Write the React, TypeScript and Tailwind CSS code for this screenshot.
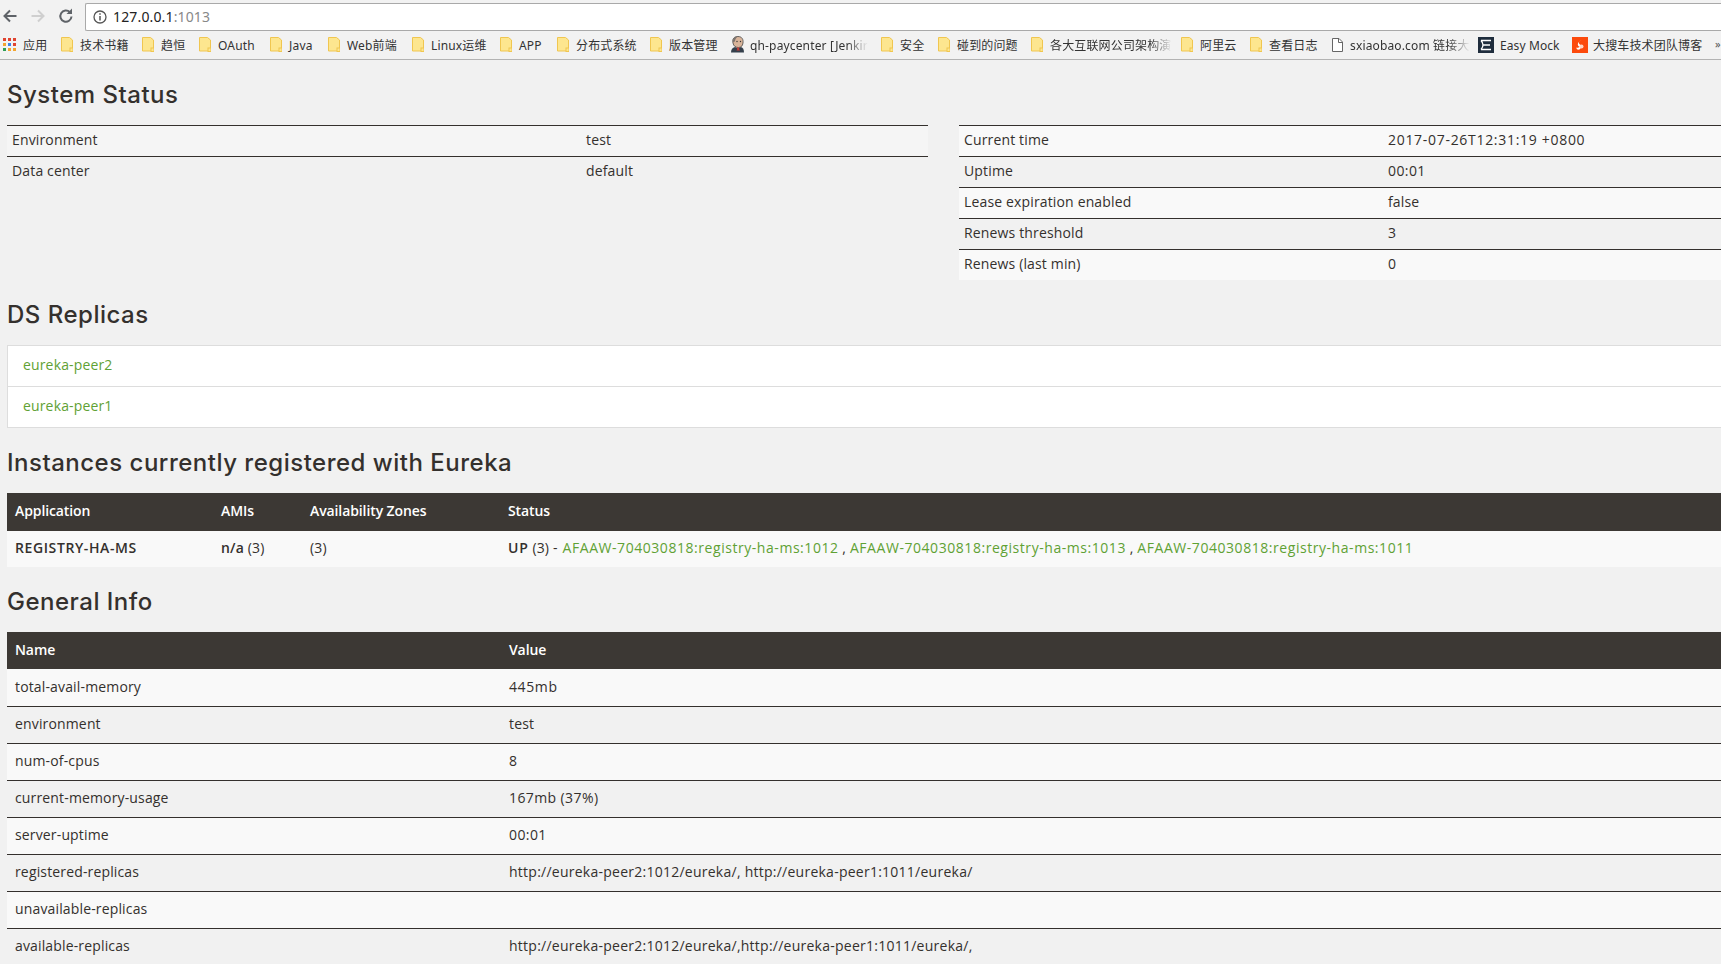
import React from "react";

const sans = "font-['Open_Sans','Noto_Sans_CJK_SC',sans-serif]";

function Folder() {
  return (
    <svg width="12" height="15" viewBox="0 0 12 15" className="shrink-0">
      <path d="M.5.5h8l3 2.5v11H.5z" fill="#fde68f" stroke="#f0c650" />
      <rect x="9" y="11" width="3" height="3.5" fill="#fde68f" stroke="#f0c650" strokeWidth="1" />
    </svg>
  );
}

function Apps() {
  const colors = ["#e0432f", "#e0432f", "#e0432f", "#f3a52f", "#3d82e8", "#e0432f", "#2f9e57", "#f3a52f", "#f3a52f"];
  return (
    <div className="grid shrink-0 grid-cols-[repeat(3,3px)] grid-rows-[repeat(3,3px)] gap-[2px]">
      {colors.map((c, i) => (
        <span key={i} className="block" style={{ backgroundColor: c }} />
      ))}
    </div>
  );
}

function Jenkins() {
  return (
    <svg width="15" height="17" viewBox="0 0 15 17" className="shrink-0">
      <path d="M3 7C2 3 4 .5 8 .5s5.500 3 5 6.500c-.5 3-2 4.500-4.500 4.500C5.500 11.500 3.500 10 3 7z" fill="#d8b49a" stroke="#444" strokeWidth=".8" />
      <path d="M3 6C2.500 2.500 5 .5 8 .5c-2 1-3 3-3 5z" fill="#7b7470" />
      <path d="M1 16.500c0-3 1.500-5 4-5.500l3 1.500 3-1.500c2 .5 3 2.500 3 5.500z" fill="#35404c" />
      <path d="M6.500 11.500h3l-.5 1.500 1 1.500H6.500l.8-1.500z" fill="#c23b36" />
      <circle cx="7" cy="5.500" r=".7" fill="#333" />
      <circle cx="10.500" cy="5.500" r=".7" fill="#333" />
    </svg>
  );
}

function FileIcon() {
  return (
    <svg width="11" height="14" viewBox="0 0 11 14" className="shrink-0">
      <path d="M.5.500h6.500l3.500 3.500v9.500H.5z" fill="#fff" stroke="#666" />
      <path d="M6.500.500v4h4" fill="none" stroke="#666" />
    </svg>
  );
}

function EasyMock() {
  return (
    <svg width="16" height="16" viewBox="0 0 16 16" className="shrink-0">
      <rect width="16" height="16" fill="#1f2d3d" />
      <path d="M3 3.500h10M5.500 8H12M3 12.500h10M3 3.500Q7 8 3 12.500" fill="none" stroke="#fff" strokeWidth="1.300" />
    </svg>
  );
}

function Souche() {
  return (
    <svg width="16" height="16" viewBox="0 0 16 16" className="shrink-0">
      <rect width="16" height="16" fill="#fc4a0c" />
      <path d="M10 3C7 4 6 6 8 7.500c2 1 2 3-.5 5-2 .5-3.500-.5-3-2 2 .5 3 0 3-1C5 9 5 5 10 3z" fill="#fff" />
      <circle cx="9.500" cy="9.500" r="2" fill="#ffd7c6" />
    </svg>
  );
}

const fade = "[mask-image:linear-gradient(to_right,black_82%,transparent)]";

const bookmarks: { label: string; icon: React.ReactNode; w: string; text: string }[] = [
  { label: "应用", icon: <Apps />, w: "w-[58px]", text: "ml-[7px]" },
  { label: "技术书籍", icon: <Folder />, w: "w-[81px]", text: "ml-[7px]" },
  { label: "趋恒", icon: <Folder />, w: "w-[57px]", text: "ml-[7px]" },
  { label: "OAuth", icon: <Folder />, w: "w-[71px]", text: "ml-[7px] tracking-[0.2px]" },
  { label: "Java", icon: <Folder />, w: "w-[58px]", text: "ml-[7px] tracking-[0.2px]" },
  { label: "Web前端", icon: <Folder />, w: "w-[84px]", text: "ml-[7px]" },
  { label: "Linux运维", icon: <Folder />, w: "w-[88px]", text: "ml-[7px]" },
  { label: "APP", icon: <Folder />, w: "w-[57px]", text: "ml-[7px]" },
  { label: "分布式系统", icon: <Folder />, w: "w-[93px]", text: "ml-[7px]" },
  { label: "版本管理", icon: <Folder />, w: "w-[80px]", text: "ml-[7px]" },
  { label: "qh-paycenter [Jenkir", icon: <Jenkins />, w: "w-[151px]", text: `ml-[5px] ${fade}` },
  { label: "安全", icon: <Folder />, w: "w-[57px]", text: "ml-[7px]" },
  { label: "碰到的问题", icon: <Folder />, w: "w-[93px]", text: "ml-[7px]" },
  { label: "各大互联网公司架构演", icon: <Folder />, w: "w-[150px]", text: `ml-[7px] ${fade}` },
  { label: "阿里云", icon: <Folder />, w: "w-[69px]", text: "ml-[7px]" },
  { label: "查看日志", icon: <Folder />, w: "w-[82px]", text: "ml-[7px]" },
  { label: "sxiaobao.com 链接大", icon: <FileIcon />, w: "w-[146px]", text: `ml-[7px] ${fade}` },
  { label: "Easy Mock", icon: <EasyMock />, w: "w-[94px]", text: "ml-[6px] tracking-[0.1px]" },
  { label: "大搜车技术团队博客", icon: <Souche />, w: "w-[143px]", text: "ml-[5px]" },
];

function ChromeBar() {
  return (
    <header className="shrink-0 bg-[#f2f2f2] font-['Noto_Sans','Noto_Sans_CJK_SC',sans-serif]">
      <div className="flex h-[31px] items-center">
        <div className="flex w-[85px] shrink-0 items-center pt-px">
          <svg width="18" height="18" viewBox="0 0 18 18" fill="none" stroke="#5f6368" strokeWidth="2" className="ml-px">
            <path d="M15.500 9H3.500M9 3.500L3.500 9 9 14.500" />
          </svg>
          <svg width="18" height="18" viewBox="0 0 18 18" fill="none" stroke="#cfcfcf" strokeWidth="2" className="ml-[10px]">
            <path d="M2.500 9h12M9 3.500L14.500 9 9 14.500" />
          </svg>
          <svg width="18" height="18" viewBox="0 0 18 18" fill="none" stroke="#5f6368" strokeWidth="2" className="ml-[10px]">
            <path d="M14.500 9.500a5.600 5.600 0 1 1-1.600-4.300" />
            <path d="M15 1.500v5.500H9.500z" fill="#5f6368" stroke="none" />
          </svg>
        </div>
        <div className="mt-[3px] flex h-[28px] flex-1 items-center rounded-l-[2px] border border-r-0 border-[#a9a9a9] bg-white pl-[7px]">
          <svg width="14" height="14" viewBox="0 0 14 14" fill="none" stroke="#555" strokeWidth="1.300" className="shrink-0">
            <circle cx="7" cy="7" r="6" />
            <path d="M7 6v4.500M7 3.300v1.500" strokeWidth="1.500" />
          </svg>
          <span className="ml-[6px] text-[14px] leading-none text-[#222]">
            127.0.0.1<span className="text-[#888]">:1013</span>
          </span>
        </div>
      </div>
      <div className="flex h-[29px] items-center overflow-hidden border-b border-[#b3b3b3] pb-px pl-[3px] text-[12px] text-[#333]">
        {bookmarks.map((b) => (
          <div key={b.label} className={`flex shrink-0 items-center ${b.w}`}>
            {b.icon}
            <span className={`whitespace-nowrap pt-[2px] ${b.text}`}>{b.label}</span>
          </div>
        ))}
        <span className="text-[11px] text-[#555]">»</span>
      </div>
    </header>
  );
}

function Heading({ children, className }: { children: React.ReactNode; className: string }) {
  return (
    <h2 className={`flex h-[34px] shrink-0 items-center font-['Inter',sans-serif] text-[24px] font-medium tracking-[0.5px] text-[#34302d] ${className}`}>
      {children}
    </h2>
  );
}

function KV({ rows, col, stripeFirst }: { rows: [string, string, string?][]; col: string; stripeFirst: string }) {
  return (
    <table className="w-full table-fixed border-separate border-spacing-0">
      <colgroup>
        <col className={col} />
        <col />
      </colgroup>
      <tbody>
        {rows.map(([k, v, t], i) => (
          <tr key={k} className={i % 2 === 0 ? stripeFirst : ""}>
            <td className="h-[31px] border-t border-[#34302d] px-[5px] pb-[3px]">{k}</td>
            <td className={`h-[31px] border-t border-[#34302d] px-[5px] pb-[3px] ${t ?? ""}`}>{v}</td>
          </tr>
        ))}
      </tbody>
    </table>
  );
}

const general: [string, string, string][] = [
  ["total-avail-memory", "445mb", "tracking-[0.6px]"],
  ["environment", "test", ""],
  ["num-of-cpus", "8", ""],
  ["current-memory-usage", "167mb (37%)", "tracking-[0.4px]"],
  ["server-uptime", "00:01", "tracking-[0.4px]"],
  ["registered-replicas", "http://eureka-peer2:1012/eureka/, http://eureka-peer1:1011/eureka/", "tracking-[0.25px]"],
  ["unavailable-replicas", "", ""],
  ["available-replicas", "http://eureka-peer2:1012/eureka/,http://eureka-peer1:1011/eureka/,", "tracking-[0.25px]"],
];

const Link = ({ children }: { children: React.ReactNode }) => (
  <a className="text-[#5fa134]">{children}</a>
);

const Inst = ({ children }: { children: React.ReactNode }) => (
  <a className="tracking-[0.55px] text-[#5fa134]">{children}</a>
);

export default function App() {
  return (
    <div className={`flex h-[964px] w-full flex-col overflow-hidden bg-[#f1f1f1] text-[14px] tracking-[0.15px] text-[#34302d] ${sans}`}>
      <ChromeBar />
      <main className="flex flex-col pl-[7px]">
        <Heading className="mt-[18px] mb-[13px]">System Status</Heading>
        <div className="flex h-[155px] gap-[31px]">
          <div className="w-[921px] shrink-0">
            <KV
              col="w-[574px]"
              stripeFirst="bg-[#f5f5f5]"
              rows={[
                ["Environment", "test"],
                ["Data center", "default"],
              ]}
            />
          </div>
          <div className="flex-1">
            <KV
              col="w-[424px]"
              stripeFirst="bg-[#f9f9f9]"
              rows={[
                ["Current time", "2017-07-26T12:31:19 +0800", "tracking-[0.7px]"],
                ["Uptime", "00:01", "tracking-[0.4px]"],
                ["Lease expiration enabled", "false"],
                ["Renews threshold", "3"],
                ["Renews (last min)", "0"],
              ]}
            />
          </div>
        </div>

        <Heading className="mt-[18px] mb-[13px]">DS Replicas</Heading>
        <ul className="flex flex-col border border-r-0 border-[#dddddd] bg-white">
          <li className="flex h-[41px] items-center border-b border-[#dddddd] pb-[3px] pl-[15px]">
            <Link>eureka-peer2</Link>
          </li>
          <li className="flex h-[40px] items-center pb-[3px] pl-[15px]">
            <Link>eureka-peer1</Link>
          </li>
        </ul>

        <Heading className="mt-[18px] mb-[13px]">Instances currently registered with Eureka</Heading>
        <table className="w-full table-fixed border-separate border-spacing-0">
          <colgroup>
            <col className="w-[206px]" />
            <col className="w-[89px]" />
            <col className="w-[198px]" />
            <col />
          </colgroup>
          <thead>
            <tr className="bg-[#3c3834] text-left tracking-[-0.1px] text-white">
              <th className="h-[38px] px-[8px] pb-[3px] font-semibold">Application</th>
              <th className="px-[8px] pb-[3px] font-semibold">AMIs</th>
              <th className="px-[8px] pb-[3px] font-semibold">Availability Zones</th>
              <th className="px-[8px] pb-[3px] font-semibold">Status</th>
            </tr>
          </thead>
          <tbody>
            <tr className="bg-[#f9f9f9]">
              <td className="h-[36px] px-[8px] pb-[3px] font-semibold tracking-[0.6px]">REGISTRY-HA-MS</td>
              <td className="px-[8px] pb-[3px]">
                <b className="font-semibold">n/a</b> (3)
              </td>
              <td className="px-[8px] pb-[3px]">(3)</td>
              <td className="px-[8px] pb-[3px]">
                <b className="font-semibold tracking-[0.8px]">UP</b> (3) -<span className="ml-[5px]"><Inst>AFAAW-704030818:registry-ha-ms:1012</Inst></span> , <Inst>AFAAW-704030818:registry-ha-ms:1013</Inst> , <Inst>AFAAW-704030818:registry-ha-ms:1011</Inst>
              </td>
            </tr>
          </tbody>
        </table>

        <Heading className="mt-[18px] mb-[13px]">General Info</Heading>
        <table className="w-full table-fixed border-separate border-spacing-0">
          <colgroup>
            <col className="w-[494px]" />
            <col />
          </colgroup>
          <thead>
            <tr className="bg-[#3c3834] text-left tracking-[-0.1px] text-white">
              <th className="h-[37px] px-[8px] pb-[3px] font-semibold">Name</th>
              <th className="px-[8px] pb-[3px] font-semibold">Value</th>
            </tr>
          </thead>
          <tbody>
            {general.map(([k, v, t], i) => (
              <tr key={k} className={i % 2 === 0 ? "bg-[#f9f9f9]" : ""}>
                <td className={`h-[37px] px-[8px] pb-[3px] ${i ? "border-t border-[#34302d]" : ""}`}>{k}</td>
                <td className={`px-[8px] pb-[3px] ${t} ${i ? "border-t border-[#34302d]" : ""}`}>{v}</td>
              </tr>
            ))}
          </tbody>
        </table>
      </main>
    </div>
  );
}
